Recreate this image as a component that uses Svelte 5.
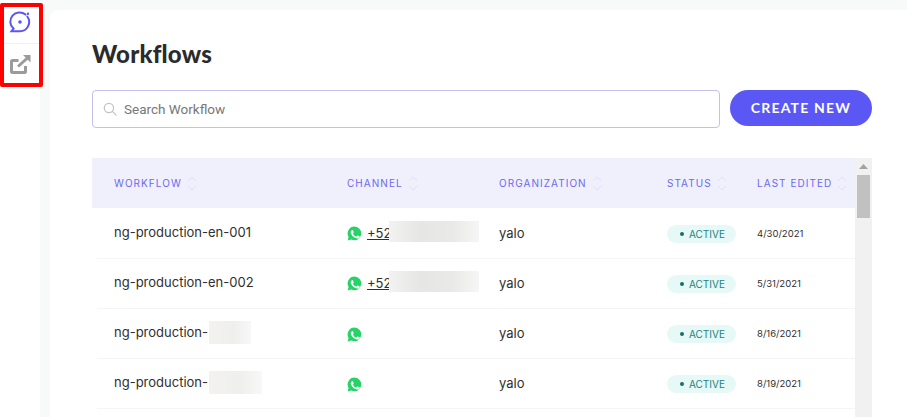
<script>
  const rows = [
    { name: "ng-production-en-001", phone: "+52", blur: 90, date: "4/30/2021" },
    { name: "ng-production-en-002", phone: "+52", blur: 90, date: "5/31/2021" },
    { name: "ng-production-", nameBlur: 42, date: "8/16/2021" },
    { name: "ng-production-", nameBlur: 53, date: "8/19/2021" }
  ];
  const columns = ["Workflow", "Channel", "Organization", "Status", "Last Edited"];
</script>

{#snippet whatsapp()}
  <svg class="wa" viewBox="0 0 16 16" width="15" height="15">
    <path fill="#25d366" d="M8 .6a7.300 7.300 0 0 0-6.300 11L.7 15.400l3.900-1A7.300 7.300 0 1 0 8 .6z" />
    <path fill="#fff" d="M5.800 4.300c-.3 0-.6.100-.8.400-.3.300-1 .9-1 2.100s.9 2.300 1 2.500c.1.200 1.700 2.600 4.100 3.500 2 .8 2.400.6 2.800.6.500-.1 1.400-.6 1.600-1.100.2-.6.200-1 .1-1.100l-.5-.3-1.600-.8c-.2-.1-.4-.1-.5.100l-.8.900c-.1.200-.3.200-.5.100-.7-.3-1.400-.7-2-1.200-.6-.5-1-1.100-1.300-1.700-.1-.2 0-.3.100-.4l.4-.5.200-.4v-.4L6.500 4.800c-.2-.4-.4-.5-.7-.5z" />
  </svg>
{/snippet}

<div class="page">
  <aside class="rail">
    <div class="rail-item">
      <svg viewBox="0 0 24 24" width="24" height="24" fill="none">
        <path d="M19.300 6.500A9.200 9.200 0 0 1 12 21.200H3.500l2-2.600A9.200 9.200 0 0 1 17.500 4.600" stroke="#5b57f5" stroke-width="2" stroke-linecap="round" />
        <circle cx="12" cy="12" r="1.800" fill="#5b57f5" />
        <circle cx="20" cy="3.800" r="1.200" fill="#5b57f5" />
      </svg>
    </div>
    <div class="rail-item">
      <svg viewBox="0 0 24 24" width="24" height="24" fill="none" stroke="#9b9b9b" stroke-width="3">
        <path d="M10.500 7.500H4.500a1 1 0 0 0-1 1v10a1 1 0 0 0 1 1h12a1 1 0 0 0 1-1V13" />
        <path d="M10 13.500 20 4.500" />
        <path d="M15 2h7.500v7.500z" fill="#9b9b9b" stroke="none" />
      </svg>
    </div>
  </aside>

  <main class="content">
    <h1>Workflows</h1>

    <div class="toolbar">
      <label class="search">
        <svg viewBox="0 0 16 16" width="14" height="14" fill="none" stroke="#c2c2c2" stroke-width="1.400">
          <circle cx="6.800" cy="6.800" r="5.300" />
          <path d="m10.700 10.700 4.300 4.300" stroke-linecap="round" />
        </svg>
        <input type="text" placeholder="Search Workflow" />
      </label>
      <button class="create">CREATE NEW</button>
    </div>

    <div class="table-wrap">
      <div class="table">
        <div class="row head">
          {#each columns as col}
            <div class="th">
              <span>{col}</span>
              <svg viewBox="0 0 10 15" width="10" height="15" fill="none" stroke="#e0dff8" stroke-width="1">
                <path d="m1 5 4-4 4 4M1 10l4 4 4-4" />
              </svg>
            </div>
          {/each}
        </div>
        {#each rows as row}
          <div class="row">
            <div class="td name">
              {row.name}
              {#if row.nameBlur}
                <span class="blur name-blur" style="width: {row.nameBlur}px"></span>
              {/if}
            </div>
            <div class="td channel" class:no-phone={!row.phone}>
              {@render whatsapp()}
              {#if row.phone}
                <a href="#top">{row.phone}</a>
                <span class="blur phone-blur" style="width: {row.blur}px"></span>
              {/if}
            </div>
            <div class="td org">yalo</div>
            <div class="td"><span class="badge"><i></i>ACTIVE</span></div>
            <div class="td date">{row.date}</div>
          </div>
        {/each}
      </div>
      <div class="scrollbar">
        <svg viewBox="0 0 9 5" width="9" height="5"><path d="M4.500 0 9 5H0z" fill="#a3a3a3" /></svg>
        <div class="thumb"></div>
      </div>
    </div>
  </main>

  <div class="highlight"></div>
</div>

<style>
  :global(body) {
    margin: 0;
    background: #f8f9f9;
    font-family: Inter, "Liberation Sans", sans-serif;
  }

  .page {
    position: relative;
    display: flex;
    height: 417px;
    overflow: hidden;
  }

  .rail {
    width: 40px;
    flex: none;
    background: #fff;
    display: flex;
    flex-direction: column;
  }

  .rail-item {
    height: 44px;
    display: flex;
    align-items: center;
    justify-content: center;
    border-bottom: 1px solid #f0f0f0;
    box-sizing: border-box;
  }

  .rail-item + .rail-item {
    border-bottom: none;
    height: 42px;
  }

  .highlight {
    position: absolute;
    left: 0;
    top: 3px;
    width: 43px;
    height: 84px;
    border: 4px solid #fe0000;
    border-radius: 2px;
    box-sizing: border-box;
  }

  .content {
    flex: 1;
    margin: 10px 0 0 10px;
    padding: 29px 35px 0 42px;
    background: #fff;
    border-top-left-radius: 8px;
    min-width: 0;
  }

  h1 {
    margin: 0 0 22px;
    font-family: Lato, sans-serif;
    font-size: 24px;
    line-height: 29px;
    font-weight: 900;
    letter-spacing: 0.2px;
    color: #2b2b2b;
  }

  .toolbar {
    display: flex;
    align-items: flex-start;
    gap: 10px;
    margin-bottom: 30px;
  }

  .search {
    flex: 1;
    height: 38px;
    box-sizing: border-box;
    display: flex;
    align-items: center;
    gap: 5px;
    padding-left: 10px;
    border: 1px solid #c5bfec;
    border-radius: 4px;
  }

  .search input {
    flex: 1;
    min-width: 0;
    padding: 0 2px;
    border: none;
    outline: none;
    background: none;
    font-family: Roboto, sans-serif;
    font-size: 13.5px;
    color: #333;
  }

  .search input::placeholder {
    color: #777;
    opacity: 1;
  }

  .create {
    width: 142px;
    height: 36px;
    padding: 0 0 2px;
    border: none;
    border-radius: 18px;
    background: #5b57f5;
    color: #fff;
    font-family: Lato, sans-serif;
    font-size: 14px;
    font-weight: 700;
    letter-spacing: 1.2px;
  }

  .table-wrap {
    display: flex;
    align-items: flex-start;
  }

  .table {
    flex: 1;
    min-width: 0;
  }

  .row {
    display: grid;
    grid-template-columns: 233px 152px 168px 90px 1fr;
    height: 50px;
    align-items: center;
    margin-left: 5px;
    padding-left: 17px;
    box-shadow: 0 1px 0 #f5f5f5;
    box-sizing: border-box;
    color: #2f2f2f;
    font-size: 13px;
  }

  .row.head {
    margin-left: 0;
    padding-left: 22px;
    background: #f0f0fd;
    box-shadow: none;
  }

  .th {
    display: flex;
    align-items: center;
    gap: 5px;
    font-size: 10px;
    letter-spacing: 1.05px;
    text-transform: uppercase;
    white-space: nowrap;
    color: #6c68f0;
  }

  .td {
    position: relative;
    white-space: nowrap;
  }

  .name {
    margin-bottom: 2px;
  }

  .channel {
    display: flex;
    align-items: center;
    gap: 5px;
  }

  .wa {
    flex: none;
  }

  .no-phone .wa {
    margin-top: 2px;
  }

  .channel a {
    color: #2f2f2f;
  }

  .blur {
    position: absolute;
  }

  .phone-blur {
    left: 42px;
    top: -4px;
    height: 21px;
    background: linear-gradient(90deg, #f2f2f0, #e6e7e5 35%, #e9e9e8 70%, #f6f6f6);
  }

  .name-blur {
    left: 95px;
    top: -3px;
    height: 23px;
    background: linear-gradient(90deg, #f3f2f0, #efefee 60%, #f8f8f8);
  }

  .badge {
    display: inline-flex;
    align-items: center;
    gap: 5px;
    height: 18px;
    width: 69px;
    box-sizing: border-box;
    padding-left: 13px;
    border-radius: 9px;
    background: #e6f9f7;
    color: #1b8480;
    font-size: 10px;
  }

  .badge i {
    width: 4px;
    height: 4px;
    border-radius: 50%;
    background: #15706c;
  }

  .date {
    font-size: 9.5px;
  }

  .scrollbar {
    width: 17px;
    flex: none;
    height: 259px;
    background: #f1f1f1;
    display: flex;
    flex-direction: column;
    align-items: center;
    padding-top: 6px;
    box-sizing: border-box;
  }

  .thumb {
    width: 13px;
    height: 43px;
    margin-top: 6px;
    background: #c1c1c1;
  }
</style>
